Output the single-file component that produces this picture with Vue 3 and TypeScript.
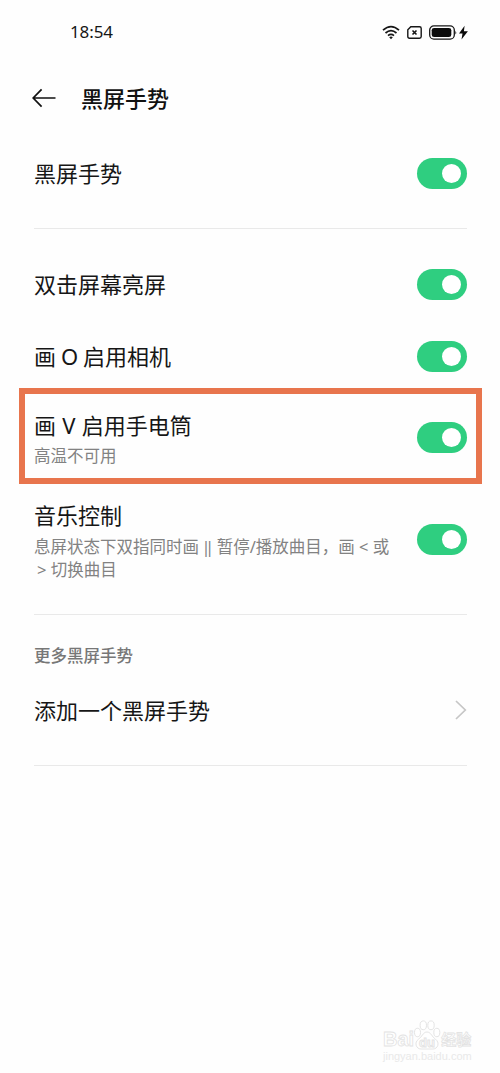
<script setup lang="ts">
interface Gesture {
  key: string
  title: string
  note?: string[]
}

const gestures: Gesture[] = [
  { key: 'wake', title: '双击屏幕亮屏' },
  { key: 'camera', title: '画 O 启用相机' },
  { key: 'torch', title: '画 V 启用手电筒', note: ['高温不可用'] },
  { key: 'music', title: '音乐控制', note: ['息屏状态下双指同时画 ‖ 暂停/播放曲目，画 < 或', '> 切换曲目'] },
]
</script>

<template>
  <main class="screen">
    <div class="status">
      <span class="clock">18:54</span>
      <div class="indicators">
        <svg class="wifi" width="18" height="15" viewBox="0 0 18 15" fill="none" stroke="#161616" stroke-width="1.7">
          <path d="M1 5.2Q9-1.9 17 5.2M3.5 8Q9 3.2 14.5 8M6 10.7Q9 8.2 12 10.7" />
          <path d="M7.2 12.2Q9 11 10.8 12.2L9 14.2Z" fill="#161616" stroke="none" />
        </svg>
        <svg class="sim" width="15" height="13" viewBox="0 0 15 13" fill="none" stroke="#161616">
          <path d="M3.8.8H12.5Q14.2.8 14.2 2.5V10.5Q14.2 12.2 12.5 12.2H2.5Q.8 12.2.8 10.5V3.8Z" stroke-width="1.4" />
          <path d="M5.5 4.5L9.5 8.5M9.5 4.5L5.5 8.5" stroke-width="1.6" />
        </svg>
        <svg class="battery" width="39" height="15" viewBox="0 0 39 15">
          <rect x=".7" y=".9" width="24.6" height="13.2" rx="4.2" fill="none" stroke="#161616" stroke-width="1.3" />
          <rect x="2.7" y="2.9" width="19.6" height="9.2" rx="2.4" fill="#0b0b0b" />
          <path d="M26.4 5.4Q28 7.5 26.4 9.6Z" fill="#161616" />
          <path d="M35.6.8L30 8.6H33.5L32.5 14.6L38.9 6.3H34.9Z" fill="#0b0b0b" />
        </svg>
      </div>
    </div>

    <header class="header">
      <svg width="24" height="20" viewBox="0 0 24 20" fill="none" stroke="#111" stroke-width="1.7">
        <path d="M23.5 10H1.2M9.6 1.3L1.2 10L9.6 18.7" />
      </svg>
      <h1>黑屏手势</h1>
    </header>

    <section class="row master">
      <span class="title">黑屏手势</span>
      <i class="toggle"></i>
    </section>
    <hr />

    <section class="gestures">
      <div v-for="g in gestures" :key="g.key" class="row" :class="g.key">
        <div class="copy">
          <div class="title">{{ g.title }}</div>
          <div v-for="line in g.note" :key="line" class="note">{{ line }}</div>
        </div>
        <i class="toggle"></i>
      </div>
    </section>
    <hr />

    <h2>更多黑屏手势</h2>
    <section class="row add">
      <span class="title">添加一个黑屏手势</span>
      <svg width="12" height="20" viewBox="0 0 12 20" fill="none" stroke="#c6c6c6" stroke-width="1.7">
        <path d="M1 1L10.3 10L1 19" />
      </svg>
    </section>
    <hr />

    <footer class="watermark">
      <div class="brand">
        <span class="bai">Bai</span>
        <svg width="28" height="30" viewBox="0 0 28 30" fill="#fff" stroke="#e4e4e4" stroke-width="1">
          <ellipse cx="4.5" cy="12.5" rx="3" ry="4.2" />
          <ellipse cx="10.3" cy="5.3" rx="3.2" ry="4.4" />
          <ellipse cx="18" cy="5.3" rx="3.2" ry="4.4" />
          <ellipse cx="23.8" cy="12.5" rx="3" ry="4.2" />
          <path d="M14 12C10 12 9 17 5.5 19.2C1 22.5 3 29 8 29H20C25 29 27 22.5 22.5 19.2C19 17 18 12 14 12Z" />
          <text x="14" y="26.5" text-anchor="middle">du</text>
        </svg>
        <span class="jingyan">经验</span>
      </div>
      <div class="url">jingyan.baidu.com</div>
    </footer>
  </main>
</template>

<style>
body {
  background: #fefefe;
}
</style>

<style scoped>
.screen {
  box-sizing: border-box;
  display: flex;
  flex-direction: column;
  width: 500px;
  height: 1073px;
  padding: 0 33px 0 34px;
  overflow: hidden;
  background: #fefefe;
  color: #161616;
  font-family: "Noto Sans", "Noto Sans CJK SC", sans-serif;
}
.status {
  display: flex;
  align-items: center;
  justify-content: space-between;
  height: 64px;
  flex: none;
}
.clock {
  margin-left: 36px;
  font-size: 17px;
  line-height: 24px;
  letter-spacing: -0.1px;
}
.indicators {
  display: flex;
  align-items: center;
  margin-right: -1px;
}
.sim {
  margin-left: 7px;
}
.battery {
  margin-left: 7px;
}
.header {
  display: flex;
  align-items: center;
  height: 68px;
  margin-left: -2px;
}
h1 {
  margin: 0 0 2px 25px;
  font: 500 22px/30px "Noto Sans CJK SC", sans-serif;
  color: #111;
}
.row {
  display: flex;
  align-items: center;
  justify-content: space-between;
  box-sizing: border-box;
}
.title {
  font-size: 22px;
  line-height: 30px;
  white-space: nowrap;
}
.note {
  font-size: 16.5px;
  line-height: 23px;
  color: #828282;
  white-space: nowrap;
}
.toggle {
  position: relative;
  flex: none;
  width: 50px;
  height: 31px;
  border-radius: 16px;
  background: #2fce80;
}
.toggle::after {
  content: "";
  position: absolute;
  top: 6px;
  right: 6px;
  width: 19px;
  height: 19px;
  border-radius: 50%;
  background: #fff;
}
.master {
  height: 83px;
  margin-bottom: 13px;
}
.master .title {
  margin-bottom: 1px;
}
hr {
  width: 100%;
  height: 1px;
  margin: 0;
  border: 0;
  background: #e9e9e9;
  flex: none;
}
.gestures {
  padding-top: 19px;
}
.wake {
  height: 72px;
}
.camera {
  height: 68px;
  padding-top: 4px;
}
.camera .title {
  word-spacing: -0.8px;
}
.torch {
  height: 96px;
  margin: 0 -15px;
  padding: 2px 9px 0;
  border: 6px solid #e8754d;
}
.torch .title {
  word-spacing: 0.6px;
}
.torch .note {
  margin-top: 4px;
}
.torch .copy {
  padding-top: 3px;
}
.music {
  height: 130px;
  padding-bottom: 20px;
}
.music .copy {
  padding-top: 2px;
}
.music .title {
  margin-bottom: 5px;
}
.music .note:last-child {
  padding-left: 3px;
}
h2 {
  margin: 24px 0 0;
  font: 500 16.5px/32px "Noto Sans CJK SC", sans-serif;
  color: #777;
}
.add {
  height: 94px;
  margin-top: -8px;
  margin-bottom: 8px;
}
.watermark {
  align-self: flex-end;
  width: 90px;
  margin-top: auto;
  margin-right: -6px;
  padding-bottom: 11px;
  color: #fff;
  -webkit-text-stroke: 0.8px #e3e3e3;
}
.brand {
  display: flex;
  align-items: flex-end;
  height: 30px;
}
.bai {
  font: bold 20px/22px "Liberation Sans", sans-serif;
}
.brand svg {
  flex: none;
  margin-left: -1px;
}
.brand text {
  font: bold 13px "Liberation Sans", sans-serif;
}
.jingyan {
  font: bold 15px/22px "Noto Sans CJK SC", sans-serif;
}
.url {
  font: 11px/12px "Liberation Sans", sans-serif;
  color: #e9e9e9;
  -webkit-text-stroke: 0;
}
</style>
